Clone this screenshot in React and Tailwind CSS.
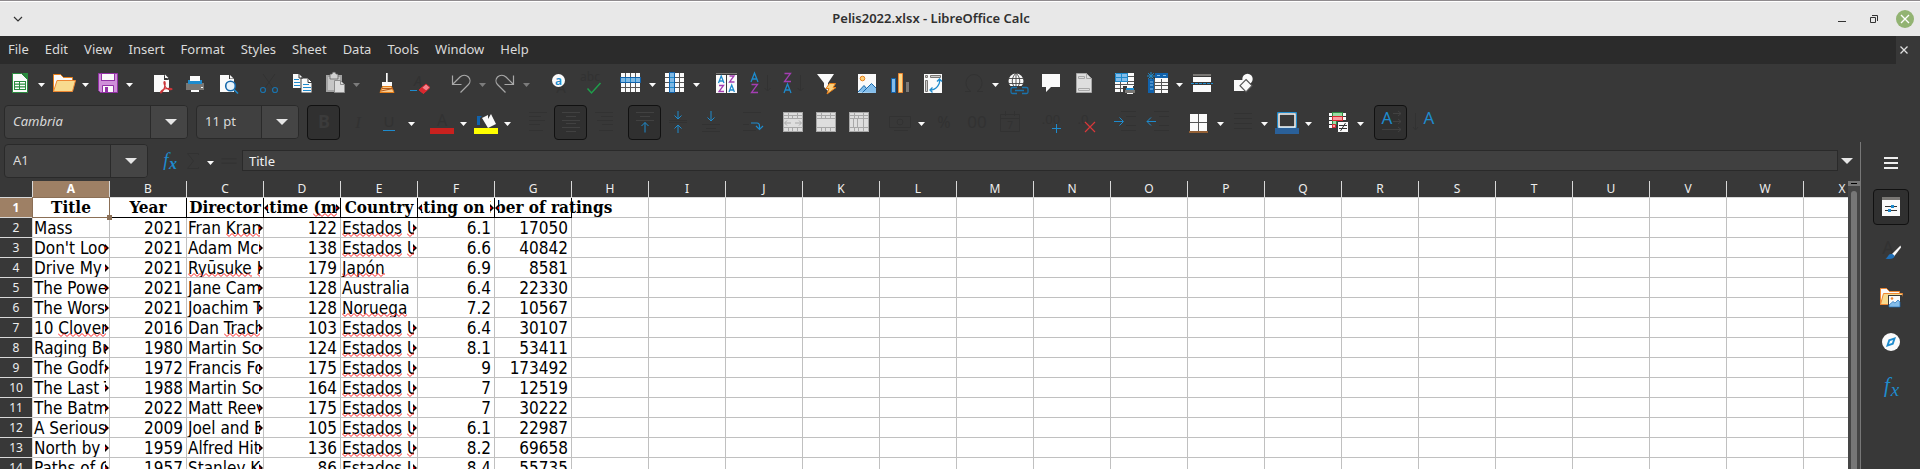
import React from "react";

const FAINT = "#323232";
const BLUE = "#1e8bcd";

function Icon({ children, size = 24 }) {
  return (
    <svg width={size} height={size} viewBox="0 0 24 24" fill="none" aria-hidden="true" className="block shrink-0">
      {children}
    </svg>
  );
}

function Glyph({ x, y, size = 14, fill = FAINT, weight = 400, children, italic, serif, anchor = "middle" }) {
  return (
    <text
      x={x}
      y={y}
      fontSize={size}
      fill={fill}
      fontWeight={weight}
      fontStyle={italic ? "italic" : "normal"}
      textAnchor={anchor}
      fontFamily={serif ? "Liberation Serif, serif" : "Noto Sans, sans-serif"}
    >
      {children}
    </text>
  );
}

const Lines = ({ rows, color = FAINT }) => (
  <g stroke={color}>
    {rows.map(([x1, x2, y]) => (
      <path key={y} d={`M${x1} ${y}H${x2}`} />
    ))}
  </g>
);

const mergeGrid = (inner) => (
  <g>
    <path d="M2 2h20v20H2z" fill="#a8a8a8" />
    <path
      d="M3 3h4v2H3zM8 3h8v2H8zM17 3h4v2h-4zM3 6h4v2H3zM8 6h3v2H8zM12 6h4v2h-4zM17 6h4v2h-4zM3 18h4v3H3zM8 18h3v3H8zM12 18h4v3h-4zM17 18h4v3h-4z"
      fill="#dedede"
    />
    {inner}
  </g>
);

const ICONS = {
  newSheet: (
    <g>
      <path d="M4.500 2.500h9l6 6v13h-15z" fill="#fafafa" stroke="#2a8c3f" />
      <path d="M14 2h6v7z" fill="#2a8c3f" />
      <path d="M6 10h12v9H6z" fill="#2a8c3f" />
      <path d="M7 11h4v1.500H7zM12 11h5v1.500h-5zM7 13.700h4v1.600H7zM12 13.700h5v1.600h-5zM7 16.500h4V18H7zM12 16.500h5V18h-5z" fill="#fff" />
    </g>
  ),
  open: (
    <g>
      <path d="M1.500 21V3.500h7l3 3h9v3" fill="#fafafa" stroke="#e8801a" />
      <path d="M1.500 20.500 5 9.500h18.500l-3 11z" fill="#f8db8f" stroke="#ed8733" />
    </g>
  ),
  save: (
    <g>
      <path d="M2.500 2.500h19v19h-17l-2-2z" fill="#cf8fd9" stroke="#9331a6" />
      <path d="M5 2h14v8H5z" fill="#9331a6" />
      <path d="M6 3h12v6H6zM7 15h10v6H7z" fill="#fafafa" />
      <path d="M6.500 21.500v-7h11v7" stroke="#9331a6" />
      <path d="M9 16h3v5H9z" fill="#9331a6" />
    </g>
  ),
  pdf: (
    <g>
      <path d="M4 4h10l5 5v12H4z" fill="#fafafa" />
      <path d="M14 4v5h5z" fill="#383838" />
      <path d="M15 3.500 18.500 7H15z" fill="#fafafa" />
      <path d="M14.500 10.500c-1 0-.5 3 1 5.500s4.500 3 6 2.500-1-1.500-4.500-1-6.500 2.500-6.500 4 3-1.500 4-5 .9-6 0-6z" stroke="#cb3438" strokeWidth="1.200" />
    </g>
  ),
  print: (
    <g>
      <path d="M3 12h18v7H3z" fill="#797774" />
      <path d="M5 9h2v1h10V9h2v4H5z" fill={BLUE} />
      <path d="M7 5h10v5H7zM8 19h8v2H8zM18 16h2v1h-2z" fill="#fafafa" />
    </g>
  ),
  preview: (
    <g>
      <path d="M4 4h9l5 4v13H4z" fill="#fafafa" />
      <path d="M13 3.500V8h5z" fill="#383838" />
      <path d="M14 4v3.500h3.500z" fill="#fafafa" />
      <circle cx="14.500" cy="15" r="4.800" fill="#e8f3fb" stroke="#1668ab" strokeWidth="1.600" />
      <path d="m18 18.500 4 4" stroke={BLUE} strokeWidth="1.600" />
    </g>
  ),
  cut: (
    <g>
      <path d="m6 3 10 14M18 3 8 17" stroke={FAINT} />
      <circle cx="6" cy="19" r="2.500" stroke="#1a73ad" strokeWidth="1.200" />
      <circle cx="18" cy="19" r="2.500" stroke="#1a73ad" strokeWidth="1.200" />
    </g>
  ),
  copy: (
    <g>
      <path d="M3 3h6l4 4v10H3z" fill="#fafafa" />
      <path d="M11 7h7l4 4v11H11z" fill="#fafafa" stroke="#383838" />
      <path d="M9 3v4h4M18 7.500v4h4" stroke="#383838" />
      <path d="M4 8.500h5M4 11.500h6M4 14.500h6M13 13.500h6M13 16.500h8M13 19.500h8" stroke={BLUE} />
    </g>
  ),
  paste: (
    <g>
      <path d="M3 4h16v17H3z" fill="#a3a3a3" />
      <path d="M5 6h12v13H5z" fill="#c6c6c6" />
      <path d="M7 3h2a2 2 0 0 1 4 0h2v5H7z" fill="#d0d0d0" stroke="#555" strokeWidth=".7" />
      <path d="M11.500 9.500h6l4 4v8h-10z" fill="#dcdcdc" stroke="#8c8c8c" />
      <path d="M17.500 9.500v4h4" stroke="#8c8c8c" />
    </g>
  ),
  brush: (
    <g>
      <path d="M11 2h2v9h-2zM7 11h10v4H7z" fill="#fafafa" />
      <path d="M12.500 2v9" stroke="#bbb" />
      <path d="M7.500 15.500h9l2.500 6H5z" fill="#f8c98a" stroke="#e8801a" />
      <path d="m6 20 12-2.500M7 17.500h11" stroke="#b4591a" />
    </g>
  ),
  clearFormat: (
    <g>
      <Glyph x="10" y="15" italic>A</Glyph>
      <path d="M2 19.500h7" stroke={BLUE} />
      <path d="m11 19 7-6 4 3.500-6.500 6z" fill="#f4808a" stroke="#d9272e" />
      <path d="m11 19 3-2.700 4.500 3.500-3 3z" fill="#d9272e" />
    </g>
  ),
  undo: <path d="M3.500 4.500v9h9M3.500 13.500 11 6a6 6 0 0 1 8.500 0 5.500 5.500 0 0 1 0 7.500L11.500 21.500" stroke="#a8a8a8" strokeWidth="1.200" />,
  redo: <path d="M20.500 4.500v9h-9M20.500 13.500 13 6a6 6 0 0 0-8.500 0 5.500 5.500 0 0 0 0 7.500l8 8" stroke="#a8a8a8" strokeWidth="1.200" />,
  find: (
    <g>
      <Glyph x="16" y="22" size="15">A</Glyph>
      <circle cx="13.500" cy="9.500" r="6.500" fill="#fafafa" />
      <Glyph x="13.500" y="13.500" size="12" weight="600" fill={BLUE}>a</Glyph>
    </g>
  ),
  spell: (
    <g>
      <Glyph x="12" y="10" size="12">abc</Glyph>
      <path d="m9.500 17.500 4 4.500 9-10" stroke="#1f9e4b" strokeWidth="1.500" />
    </g>
  ),
  row: (
    <g>
      <path d="M2 2h19v19H2z" fill="#fafafa" />
      <path d="M6.500 2v19M11.500 2v19M16.500 2v19M2 6.500h19M2 11.500h19M2 16.500h19" stroke="#555" />
      <path d="M1.500 6.500h20v5h-20z" fill="#7fb8e3" stroke="#1062ac" />
      <path d="M6.500 7v4M11.500 7v4M16.500 7v4" stroke={BLUE} />
    </g>
  ),
  column: (
    <g>
      <path d="M2 2h19v19H2z" fill="#fafafa" />
      <path d="M6.500 2v19M11.500 2v19M16.500 2v19M2 6.500h19M2 11.500h19M2 16.500h19" stroke="#555" />
      <path d="M6.500 1.500h5v20h-5z" fill="#7fb8e3" stroke="#1062ac" />
      <path d="M7 6.500h4M7 11.500h4M7 16.500h4" stroke={BLUE} />
    </g>
  ),
  sort: (
    <g>
      <path d="M1 2.500h21" stroke="#797774" />
      <path d="M1 4h21v18H1z" fill="#fafafa" />
      <path d="M11.500 4v18" stroke="#383838" />
      <g strokeWidth="1.300">
        <path d="m3.500 12 2.700-7L9 12M4.400 10h3.700M14 21l2.700-7 2.700 7M15 19h3.600" stroke={BLUE} />
        <path d="M4 14.500h4.500l-4.500 6h5M14.500 5h4.500l-4.500 6h5" stroke="#a33eb2" />
      </g>
    </g>
  ),
  sortAsc: (
    <g>
      <g strokeWidth="1.300">
        <path d="m3 11 3.500-9 3.500 9M4.200 8h4.600" stroke={BLUE} />
        <path d="M3.500 13.500h6l-6 8h6.500" stroke="#a33eb2" />
      </g>
      <path d="M19.500 4v16m-3-3 3 3 3-3" stroke={FAINT} />
    </g>
  ),
  sortDesc: (
    <g>
      <g strokeWidth="1.300">
        <path d="M3.500 2.500h6l-6 8h6.500" stroke="#a33eb2" />
        <path d="m3 22 3.500-9 3.500 9M4.200 19h4.600" stroke={BLUE} />
      </g>
      <path d="M19.500 4v16m-3-3 3 3 3-3" stroke={FAINT} />
    </g>
  ),
  filter: (
    <g>
      <path d="M3 3h17l-6 9v8l-4-4v-4z" fill="#fafafa" />
      <path d="M15.500 12.500h6l-2.500 4h3l-9 6.500 2-5.500h-3z" fill="#fbd07c" stroke="#e8801a" />
    </g>
  ),
  image: (
    <g>
      <path d="M3 3h18v19H3z" fill="#fafafa" />
      <circle cx="7.500" cy="7.500" r="2.300" fill="#fbd07c" stroke="#e8801a" />
      <path d="m3 21.500 6-7 3 3 4.500-5 4.500 4.500v5z" fill="#84bdea" />
      <path d="m3 21 6-6.500 2.500 3m-4 4L16.500 12.500 21 17" stroke="#1668ab" />
    </g>
  ),
  chart: (
    <g>
      <path d="M3.500 7.500h4v14h-4z" fill="#84bdea" stroke="#1062ac" />
      <path d="M10.500 2.500h4v19h-4z" fill="#fbd888" stroke="#ed8733" />
      <path d="M18 11h3v10h-3z" fill="#797774" />
    </g>
  ),
  pivot: (
    <g>
      <path d="M3 3h18v19H3z" fill="#fafafa" />
      <path d="M4.500 4.500h2v2h-2zM9.500 4.500h10v2h-10zM4.500 9.500h2v11h-2z" fill="#ccc" stroke="#797774" />
      <path d="M18.500 8c1 5-3 11-9.500 11M16 10.500 18.500 8l2.500 2.500M11.500 16.500 9 19l2.500 2.500" stroke={BLUE} strokeWidth="1.300" />
    </g>
  ),
  omega: <path d="M3 20.500h6c-3-2-5-5-5-9a8 8 0 0 1 16 0c0 4-2 7-5 9h6" stroke={FAINT} />,
  link: (
    <g>
      <circle cx="10" cy="10" r="7.500" fill="#fafafa" />
      <path d="M2 7.500h16M2 12.500h16M10 2v16M10 2c-5 5-5 11 0 16M10 2c5 5 5 11 0 16" stroke="#444" strokeWidth=".9" />
      <path d="M3 15h21v9H3z" fill="#383838" />
      <path d="M11 16.500H6.500q-1.500 0-1.500 1.500v3q0 1.500 1.500 1.500H11M16 16.500h4.500q1.500 0 1.500 1.500v3q0 1.500-1.500 1.500H16M9 19.500h9" stroke="#1a73ad" strokeWidth="1.300" />
    </g>
  ),
  comment: <path d="M3 3h18v13h-9l-5 5v-5H3z" fill="#fafafa" />,
  header: (
    <g>
      <path d="M4.500 2.500h10l5 5v14h-15z" fill="#dedede" stroke="#a8a8a8" />
      <path d="M14.500 2.500v5h5M6.500 5.500h6v2h-6zM6.500 17.500h11v2h-11z" stroke="#a8a8a8" />
    </g>
  ),
  printArea: (
    <g>
      <path d="M2 2h19v19H2z" fill="#fafafa" />
      <path d="M7.500 2v19M14.500 2v19M2 10.500h19M2 13.500h19M2 17.500h19M14 5.500h7" stroke="#555" />
      <path d="M2.500 2.500h12v8h-12z" fill="#84bdea" stroke={BLUE} />
      <path d="M8.500 3v7M3 6.500h11" stroke={BLUE} />
      <path d="M10 15h14v9H10z" fill="#383838" />
      <path d="M14 14h6v3h-6zM14 22h6v1h-6z" fill="#fafafa" />
      <path d="M13 17h8v2h-8z" fill={BLUE} />
      <path d="M12 19h10v3H12z" fill="#797774" />
    </g>
  ),
  freeze: (
    <g>
      <path d="M3 3h19v19H3z" fill="#fafafa" />
      <path d="M8.500 8v14M15.500 8v14M9 11.500h13M9 14.500h13M9 18.500h13" stroke="#555" />
      <path d="M2 8h6v14H2zM9 2h13v5H9z" fill="#1062ac" />
      <path d="M4 11h3M4 14h3M4 18h3M11 4.500h3M17 4.500h3" stroke="#84bdea" />
      <path d="M2 1h7v7H2z" fill="#383838" />
      <path d="M5 1v8M1 5h8M2.200 2.200l5.600 5.600M7.800 2.200 2.200 7.800" stroke={BLUE} />
    </g>
  ),
  split: (
    <g>
      <path d="M3 3h18v2H3z" fill="#797774" />
      <path d="M3 6h18v5H3zM3 14h18v7H3z" fill="#fafafa" />
      <path d="M1 12.500h22" stroke={BLUE} strokeDasharray="3 1" />
    </g>
  ),
  shapes: (
    <g>
      <circle cx="16.500" cy="8" r="5.200" fill="#fafafa" />
      <path d="M3 9h11v11H3z" fill="#fafafa" />
      <path d="m15 8.500 6 6.200-6 6.300-6-6.300z" fill="#fafafa" stroke="#555" strokeWidth="1.200" />
    </g>
  ),
  bold: <Glyph x="12" y="18" size="18" weight="700" fill="#3b3b3b">B</Glyph>,
  italic: <Glyph x="13" y="18" size="17" italic serif>I</Glyph>,
  underline: (
    <g>
      <Glyph x="11" y="17" size="15">U</Glyph>
      <path d="M5 20.500h12" stroke={BLUE} />
    </g>
  ),
  fontColor: (
    <g>
      <Glyph x="12" y="16" size="16">A</Glyph>
      <path d="M0 18h24v6H0z" fill="#c9211e" />
    </g>
  ),
  highlight: (
    <g>
      <path d="M3 15V6h5L6 8v7z" fill="#1062ac" />
      <path d="m8 8 4-2 2-1v4l3-5 5 10-8 4z" fill="#fafafa" />
      <path d="M0 18h24v6H0z" fill="#ffff00" />
    </g>
  ),
  alignLeft: <Lines rows={[[3, 21, 2.5], [3, 15, 6.5], [3, 19, 10.5], [3, 14, 14.5], [3, 17, 20.5]]} />,
  alignCenter: <Lines color="#414141" rows={[[3, 21, 2.5], [7, 17, 6.5], [3, 21, 10.5], [7, 17, 13.5], [3, 21, 17.5], [7, 17, 21.5]]} />,
  alignRight: <Lines rows={[[3, 21, 2.5], [9, 21, 6.5], [5, 21, 10.5], [10, 21, 14.5], [7, 21, 20.5]]} />,
  alignTop: (
    <g>
      <Lines color="#414141" rows={[[3, 21, 2.5], [7, 17, 6.5], [3, 21, 10.5]]} />
      <path d="M12 12.500v10M8.500 16 12 12.500l3.500 3.500" stroke={BLUE} />
    </g>
  ),
  alignMiddle: (
    <g>
      <Lines rows={[[3, 21, 10.5], [3, 21, 12.5]]} />
      <path d="M12 1v8M8.500 5.500 12 9l3.500-3.500M12 23v-8M8.500 18.500 12 15l3.500 3.500" stroke={BLUE} />
    </g>
  ),
  alignBottom: (
    <g>
      <Lines rows={[[3, 21, 14.5], [7, 17, 18.5], [3, 21, 21.5]]} />
      <path d="M12 1v10M8.500 7.500 12 11l3.500-3.500" stroke={BLUE} />
    </g>
  ),
  wrap: (
    <g>
      <Lines rows={[[3, 21, 2.5], [3, 9, 14.5], [3, 16, 20.5]]} />
      <path d="M11 13h6q2.500 0 2.500 3v3M16 16l3.500 3.500L23 16" stroke={BLUE} strokeWidth="1.200" />
    </g>
  ),
  mergeCenter: mergeGrid(
    <g>
      <path d="M3 9h18v8H3z" fill="#dedede" />
      <path d="M4 13h6M6 10.500 3.500 13 6 15.500M14 13h6M18 10.500l2.500 2.500-2.500 2.500" stroke="#a8a8a8" />
    </g>
  ),
  mergeCells: mergeGrid(<path d="M3 9h18v8H3z" fill="#dedede" />),
  splitCells: mergeGrid(<path d="M3 9h3v8H3zM7 9h3v8H7zM11 9h5v8h-5zM17 9h4v8h-4z" fill="#dedede" />),
  currency: (
    <g stroke={FAINT}>
      <path d="M1.500 6.500h21v11h-21zM6 20.500h14" />
      <circle cx="12" cy="12" r="3" />
    </g>
  ),
  percent: <Glyph x="12" y="18" size="16">%</Glyph>,
  number: <Glyph x="12" y="18" size="17">00</Glyph>,
  date: (
    <g>
      <path d="M2.500 4.500h19v17h-19zM3 8.500h18M7.500 1v5M16.500 1v5" stroke={FAINT} />
      <Glyph x="12" y="19" size="10">7</Glyph>
    </g>
  ),
  addDecimal: (
    <g>
      <Glyph x="12" y="14" size="13">.00</Glyph>
      <path d="M17.500 14v9M13 18.500h9" stroke={BLUE} />
    </g>
  ),
  delDecimal: (
    <g>
      <Glyph x="11" y="14" size="13">.0</Glyph>
      <path d="m13 12 10 10M23 12 13 22" stroke="#d9383a" strokeWidth="1.200" />
    </g>
  ),
  indentMore: (
    <g>
      <Lines rows={[[8, 23, 1.5], [13, 23, 6.5], [13, 23, 15.5], [8, 23, 20.5]]} />
      <path d="M1 11.500h9M6.500 7.500l4 4-4 4" stroke={BLUE} />
    </g>
  ),
  indentLess: (
    <g>
      <Lines rows={[[8, 23, 1.5], [13, 23, 6.5], [13, 23, 15.5], [8, 23, 20.5]]} />
      <path d="M10 11.500H1M5 7.500l-4 4 4 4" stroke={BLUE} />
    </g>
  ),
  borders: (
    <g>
      <path d="M3 4h17v17H3z" fill="#fafafa" />
      <path d="M11.500 4v17M3 12.500h17" stroke="#555" />
      <path d="M2 22h19" stroke="#ed8733" />
    </g>
  ),
  borderStyle: <Lines rows={[[3, 21, 3.5], [3, 21, 8.5], [3, 21, 13.5], [3, 21, 18.5]]} />,
  borderColor: (
    <g>
      <path d="M2.500 2.500h19v15h-19z" stroke={BLUE} />
      <path d="M4 4h16v13H4z" stroke="#fafafa" strokeWidth="1.500" />
      <path d="M0 18h24v6H0z" fill="#2a6099" />
    </g>
  ),
  conditional: (
    <g>
      <path d="M2 3h3v3H2zM2 7h3v3H2zM2 11h3v3H2zM2 15h3v3H2zM16 3h3v3h-3zM16 7h3v3h-3z" fill="#fafafa" />
      <path d="M5.500 2.500h10v4h-10zM5.500 10.500h4v4h-4z" fill="#99dba4" stroke="#2a8c3f" />
      <path d="M5.500 6.500h10v4h-10zM5.500 14.500h3v3h-3z" fill="#f99ba0" stroke="#d9272e" />
      <path d="M10.500 11.500h11v11h-11z" fill="#fafafa" stroke="#383838" />
      <path d="M12 15.500h8M12 18.500h8M18.500 13l-5 8" stroke="#333" />
    </g>
  ),
  textLtr: (
    <g>
      <Glyph x="8" y="14" size="17" fill={BLUE}>A</Glyph>
      <path d="M14 3.500h8M19 1l3 2.500L19 6M14 11.500h8M19 9l3 2.500-3 2.500M3 19.500h19M19 17l3 2.500-3 2.500" stroke="#414141" />
    </g>
  ),
  textTtb: (
    <g>
      <path d="M3.500 3v17M1 17l2.500 3L6 17" stroke={FAINT} />
      <Glyph x="17" y="14" size="17" fill={BLUE}>A</Glyph>
    </g>
  ),
  properties: (
    <g>
      <path d="M3 2h18v3H3z" fill="#797774" />
      <path d="M3 5h18v16H3z" fill="#fafafa" />
      <path d="M6 11.500h12M6 15.500h12" stroke="#333" />
      <path d="M12 10h3v3h-3zM9 14h3v3H9z" fill={BLUE} />
    </g>
  ),
  styles: (
    <g>
      <Glyph x="9" y="14" size="18">A</Glyph>
      <path d="M21.500 5.500 13 14l2 2.500 7-9z" fill="#fafafa" />
      <path d="M12 14c-3 0-3 3.500-5.500 4.500 4 1.200 9 .5 9-2.500-.5-1.500-2-2-3.500-2z" fill="#1e6fb8" />
    </g>
  ),
  gallery: (
    <g>
      <path d="M1.500 19.500V3.500h6l3 3h10v3" fill="#fafafa" stroke="#ed8733" />
      <path d="m1.500 19.500 3-11h19l-3 11z" fill="#f8db8f" stroke="#ed8733" />
      <path d="M9 10h14v13H9z" fill="#383838" />
      <path d="M10 11h11v11H10z" fill="#fafafa" />
      <circle cx="13" cy="13.500" r="1.300" fill="#ed8733" />
      <path d="m10 20 4-3.500 2 1.500 3-3 2 2v5H10z" fill="#84bdea" stroke="#1e6fb8" strokeWidth=".7" />
    </g>
  ),
  navigator: (
    <g>
      <circle cx="12" cy="12" r="9" fill="#fafafa" />
      <path d="m17 7-2.500 7.500L7 17l2.500-7.500z" fill={BLUE} />
      <path d="m14 10-1 3-3 1 1-3z" fill="#fafafa" />
    </g>
  ),
  functions: (
    <g>
      <Glyph x="8" y="17" size="21" italic serif fill={BLUE}>f</Glyph>
      <Glyph x="16" y="21" size="19" italic serif fill={BLUE}>x</Glyph>
    </g>
  ),
  fx: (
    <g>
      <Glyph x="9" y="17" size="19" italic serif fill={BLUE}>f</Glyph>
      <Glyph x="16" y="20" size="16" italic weight="700" serif fill={BLUE}>x</Glyph>
    </g>
  ),
  sum: <path d="M17.500 6v-1.500h-11l6 7.500-6 7.500h11V18" stroke={FAINT} />,
  equals: <path d="M3 9.500h18M3 14.500h18" stroke={FAINT} strokeWidth="1.500" />,
};

const Caret = ({ big, dim }) =>
  big ? (
    <svg width="12" height="6" viewBox="0 0 12 6" aria-hidden="true">
      <path d="M0 0h12L6 6z" fill="#e6e6e6" />
    </svg>
  ) : (
    <svg width="7" height="4" viewBox="0 0 7 4" aria-hidden="true">
      <path d="M0 0h7L3.500 4z" fill={dim ? "#7c7c7c" : "#fafafa"} />
    </svg>
  );

function Tool({ icon, label, pressed }) {
  return (
    <button
      type="button"
      aria-label={label}
      aria-pressed={pressed ? true : undefined}
      className={
        pressed
          ? "flex h-[35px] w-[33px] shrink-0 items-center justify-center rounded-sm border border-[#111] bg-[#303030]"
          : "flex h-[35px] w-[33px] shrink-0 items-center justify-center"
      }
    >
      <Icon>{ICONS[icon]}</Icon>
    </button>
  );
}

function Toolbar({ items }) {
  return items.map((group, g) => (
    <div key={g} className="flex items-center">
      {group.map(([icon, label, opt = ""]) => (
        <React.Fragment key={icon}>
          <Tool icon={icon} label={label} pressed={opt.includes("p")} />
          {opt.includes("m") && (
            <button type="button" aria-label={`${label} options`} className="flex h-[35px] w-[11px] items-center justify-center pt-1">
              <Caret dim={opt.includes("d")} />
            </button>
          )}
        </React.Fragment>
      ))}
    </div>
  ));
}

function Combo({ label, value, className, inputClass = "" }) {
  return (
    <div className={`flex h-[34px] shrink-0 overflow-hidden rounded border border-[#2a2a2a] bg-[#404040] ${className}`}>
      <input aria-label={label} defaultValue={value} className={`min-w-0 flex-1 bg-transparent pl-2 text-[13px] text-[#dadada] outline-none ${inputClass}`} />
      <button type="button" aria-label={`${label} list`} className="flex w-[37px] items-center justify-center border-l border-[#2a2a2a] bg-[#454545] pl-1">
        <Caret big />
      </button>
    </div>
  );
}

const DOCUMENT_GROUPS = [[["newSheet", "New", "m"], ["open", "Open", "m"], ["save", "Save", "m"]]];

const EDIT_GROUPS = [
  [["pdf", "Export as PDF"], ["print", "Print"], ["preview", "Print preview"]],
  [["cut", "Cut"], ["copy", "Copy"], ["paste", "Paste", "md"]],
  [["brush", "Clone formatting"], ["clearFormat", "Clear formatting"]],
  [["undo", "Undo", "md"], ["redo", "Redo", "md"]],
  [["find", "Find and replace"], ["spell", "Spelling"]],
  [["row", "Row", "m"], ["column", "Column", "m"]],
  [["sort", "Sort"], ["sortAsc", "Sort ascending"], ["sortDesc", "Sort descending"], ["filter", "AutoFilter"]],
  [["image", "Insert image"], ["chart", "Insert chart"], ["pivot", "Pivot table"]],
  [["omega", "Special character", "m"], ["link", "Hyperlink"], ["comment", "Comment"], ["header", "Headers and footers"]],
  [["printArea", "Print area"], ["freeze", "Freeze rows and columns", "m"], ["split", "Split window"]],
  [["shapes", "Draw functions"]],
];

const FORMAT_GROUPS = [
  [["bold", "Bold", "p"], ["italic", "Italic"], ["underline", "Underline", "m"]],
  [["fontColor", "Font color", "m"], ["highlight", "Background color", "m"]],
  [["alignLeft", "Align left"], ["alignCenter", "Center horizontally", "p"], ["alignRight", "Align right"]],
  [["alignTop", "Align top", "p"], ["alignMiddle", "Center vertically"], ["alignBottom", "Align bottom"]],
  [["wrap", "Wrap text"]],
  [["mergeCenter", "Merge and center"], ["mergeCells", "Merge cells"], ["splitCells", "Split cells"]],
  [["currency", "Currency", "m"], ["percent", "Percent"], ["number", "Number"], ["date", "Date"]],
  [["addDecimal", "Add decimal place"], ["delDecimal", "Delete decimal place"]],
  [["indentMore", "Increase indent"], ["indentLess", "Decrease indent"]],
  [["borders", "Borders", "m"], ["borderStyle", "Border style", "m"], ["borderColor", "Border color", "m"]],
  [["conditional", "Conditional formatting", "m"]],
  [["textLtr", "Left to right", "p"], ["textTtb", "Top to bottom"]],
];

const MENUS = ["File", "Edit", "View", "Insert", "Format", "Styles", "Sheet", "Data", "Tools", "Window", "Help"];
const COLUMNS = "ABCDEFGHIJKLMNOPQRSTUVWX".split("");

const HEADINGS = ["Title", "Year", "Director", "Runtime (mins)", "Country", "Rating on FA", "Number of ratings"];
const EU = "Estados Unidos";
const ROWS = [
  ["Mass", "2021", "Fran Kranz", "122", EU, "6.1", "17050"],
  ["Don't Look Up", "2021", "Adam McKay", "138", EU, "6.6", "40842"],
  ["Drive My Car", "2021", "Ryūsuke Hamaguchi", "179", "Japón", "6.9", "8581"],
  ["The Power of the Dog", "2021", "Jane Campion", "128", "Australia", "6.4", "22330"],
  ["The Worst Person in the World", "2021", "Joachim Trier", "128", "Noruega", "7.2", "10567"],
  ["10 Cloverfield Lane", "2016", "Dan Trachtenberg", "103", EU, "6.4", "30107"],
  ["Raging Bull", "1980", "Martin Scorsese", "124", EU, "8.1", "53411"],
  ["The Godfather", "1972", "Francis Ford Coppola", "175", EU, "9", "173492"],
  ["The Last Temptation of Christ", "1988", "Martin Scorsese", "164", EU, "7", "12519"],
  ["The Batman", "2022", "Matt Reeves", "175", EU, "7", "30222"],
  ["A Serious Man", "2009", "Joel and Ethan Coen", "105", EU, "6.1", "22987"],
  ["North by Northwest", "1959", "Alfred Hitchcock", "136", EU, "8.2", "69658"],
  ["Paths of Glory", "1957", "Stanley Kubrick", "86", EU, "8.4", "55735"],
];
const MISSPELLED = new Set(["Kranz", "Ryūsuke", "Hamaguchi", "Cloverfield", "Trachtenberg", "Estados", "Unidos", "Japón", "Noruega", "(mins)"]);

const SQUIGGLE = "M0 .5" + "l3 3l3 -3".repeat(30);

function Words({ text }) {
  return text.split(" ").map((word, i) => (
    <React.Fragment key={i}>
      {i > 0 && " "}
      {MISSPELLED.has(word) ? (
        <span className="relative inline-block">
          {word}
          <svg aria-hidden="true" className="absolute top-[15px] left-0 h-1 w-full overflow-hidden" fill="none">
            <path d={SQUIGGLE} stroke="#ff2020" />
          </svg>
        </span>
      ) : (
        word
      )}
    </React.Fragment>
  ));
}

function Overflow({ side }) {
  return (
    <svg
      width="4"
      height="8"
      viewBox="0 0 4 8"
      aria-hidden="true"
      className={side === "left" ? "absolute top-[6px] left-0 rotate-180" : "absolute top-[6px] right-0"}
    >
      <path d="M0 0v8l4-4z" fill="#000" />
      <path d="M0 2.500v3L2 4z" fill="#ff0000" />
    </svg>
  );
}

function Grid() {
  const line = "border-[#c0c0c0]";
  return (
    <table className="w-[1881px] table-fixed border-separate border-spacing-0">
      <colgroup>
        <col className="w-[33px]" />
        {COLUMNS.map((c) => (
          <col key={c} className="w-[77px]" />
        ))}
      </colgroup>
      <thead>
        <tr className="h-[17px]">
          <td className="border-r border-b border-[#d8d8d8] bg-[#383838] p-0" />
          {COLUMNS.map((c) => (
            <th
              key={c}
              scope="col"
              className={`border-r border-b p-0 text-center text-[12px] leading-4 ${
                c === "A" ? "border-r-[#d8d8d8] border-b-[#8b6f56] bg-[#9e8065] font-bold text-white" : "border-[#d8d8d8] bg-[#383838] font-normal text-[#eee]"
              }`}
            >
              {c}
            </th>
          ))}
        </tr>
      </thead>
      <tbody>
        <tr className="h-5 font-['DejaVu_Serif_Condensed','DejaVu_Serif',serif] text-[17px] font-bold text-black">
          <th scope="row" className="border-r border-b border-[#d8d8d8] border-r-[#8b6f56] bg-[#9e8065] p-0 text-center font-['Noto_Sans',sans-serif] text-[12px] leading-[19px] font-bold text-white">
            1
          </th>
          {COLUMNS.map((c, i) => {
            const text = HEADINGS[i];
            const clipped = i === 3 || i === 5;
            if (!text) return <td key={c} className={`border-r border-b bg-white p-0 ${line}`} />;
            return (
              <td key={c} className={`border-r border-b p-0 ${i === 0 ? "border-[#8b6f56]" : "border-black"} bg-white`}>
                <div className={`relative h-[19px] ${i === 0 ? "outline outline-[#8b6f56]" : ""}`}>
                  <div
                    className={`flex h-[19px] justify-center leading-[19px] whitespace-nowrap ${
                      clipped ? "mx-[3px] overflow-hidden" : i === 6 ? "[clip-path:inset(0_-60px_0_3px)]" : ""
                    }`}
                  >
                    <span className="shrink-0">
                      <Words text={text} />
                    </span>
                  </div>
                  {(clipped || i === 6) && <Overflow side="left" />}
                  {clipped && <Overflow side="right" />}
                  {i === 0 && <span className="absolute -right-[3px] -bottom-[3px] z-10 h-[5px] w-[5px] bg-[#8b6f56]" />}
                </div>
              </td>
            );
          })}
        </tr>
        {ROWS.map((row, r) => (
          <tr key={r} className="h-5 font-['DejaVu_Sans_Condensed','DejaVu_Sans',sans-serif] text-[17px] text-black">
            <th scope="row" className="border-r border-b border-[#d8d8d8] bg-[#383838] p-0 text-center font-['Noto_Sans',sans-serif] text-[12px] leading-[19px] font-normal text-[#eee]">
              {r + 2}
            </th>
            {COLUMNS.map((c, i) => {
              const text = row[i];
              const isText = i === 0 || i === 2 || i === 4;
              const long = isText && text.length > 9;
              return (
                <td key={c} className={`border-r border-b bg-white p-0 ${line}`}>
                  {text && (
                    <div className="relative">
                      <div className={`h-[19px] overflow-hidden leading-5 whitespace-nowrap ${isText ? "mr-[3px] pl-px" : "pr-[3px] text-right"}`}>
                        <Words text={text} />
                      </div>
                      {long && <Overflow side="right" />}
                    </div>
                  )}
                </td>
              );
            })}
          </tr>
        ))}
      </tbody>
    </table>
  );
}

const SIDEBAR = [
  ["properties", "Properties", true],
  ["styles", "Styles"],
  ["gallery", "Gallery"],
  ["navigator", "Navigator"],
  ["functions", "Functions"],
];

export default function App() {
  return (
    <div className="flex h-screen flex-col overflow-hidden bg-[#383838] font-['Noto_Sans',sans-serif] text-[13px] text-[#dadada]">
      <header className="flex h-9 shrink-0 items-center border-t border-[#8f8b8e] bg-[#e8e8e8] text-[#303030] shadow-[inset_0_1px_0_#fff]">
        <button type="button" aria-label="Window menu" className="flex w-9 justify-center">
          <svg width="10" height="6" viewBox="0 0 10 6" fill="none" aria-hidden="true">
            <path d="m1 1 4 4 4-4" stroke="#333" strokeWidth="1.200" />
          </svg>
        </button>
        <h1 className="flex-1 text-center text-[13px] font-semibold">Pelis2022.xlsx - LibreOffice Calc</h1>
        <div className="flex">
          <button type="button" aria-label="Minimize" className="flex w-8 items-center justify-center">
            <svg width="18" height="18" viewBox="0 0 18 18" aria-hidden="true">
              <path d="M5 11h8v1H5z" fill="#333" />
            </svg>
          </button>
          <button type="button" aria-label="Restore" className="flex w-8 items-center justify-center">
            <svg width="18" height="18" viewBox="0 0 18 18" fill="none" aria-hidden="true">
              <path d="M5.500 7.500h5v5h-5zM7 5.500h5.500V11" stroke="#333" />
            </svg>
          </button>
          <button type="button" aria-label="Close" className="flex w-[30px] items-center justify-center">
            <svg width="18" height="18" viewBox="0 0 18 18" aria-hidden="true">
              <circle cx="9" cy="9" r="9" fill="#92b372" />
              <path d="m5 5 8 8M13 5l-8 8" stroke="#fff" strokeWidth="1.300" />
            </svg>
          </button>
        </div>
      </header>

      <nav className="flex h-7 shrink-0 items-stretch">
        <div className="flex flex-1 items-center gap-4 bg-[#2b2b2b] pl-2">
          {MENUS.map((m) => (
            <button key={m} type="button">
              {m}
            </button>
          ))}
        </div>
        <button type="button" aria-label="Close document" className="flex w-6 items-center pl-1">
          <svg width="8" height="8" viewBox="0 0 8 8" aria-hidden="true">
            <path d="m.5.500 7 7M7.500.500l-7 7" stroke="#e0e0e0" strokeWidth="1.300" />
          </svg>
        </button>
      </nav>

      <div role="toolbar" aria-label="Standard" className="flex h-[38px] shrink-0 items-center gap-[10px] pl-[3px]">
        <Toolbar items={DOCUMENT_GROUPS} />
        <div className="flex items-center gap-2">
          <Toolbar items={EDIT_GROUPS} />
        </div>
      </div>

      <div role="toolbar" aria-label="Formatting" className="flex h-10 shrink-0 items-center gap-2 pl-1">
        <Combo label="Font name" value="Cambria" className="w-[184px]" inputClass="italic" />
        <Combo label="Font size" value="11 pt" className="w-[103px]" />
        <Toolbar items={FORMAT_GROUPS} />
      </div>

      <div className="flex min-h-0 flex-1">
        <main className="flex min-w-0 flex-1 flex-col">
          <div className="flex h-[39px] shrink-0 items-center pb-0.5 pl-1">
            <Combo label="Name box" value="A1" className="w-36" />
            <button type="button" aria-label="Function wizard" className="ml-2 flex w-[25px] justify-center">
              <Icon>{ICONS.fx}</Icon>
            </button>
            <button type="button" aria-label="Select function" className="flex w-6 justify-center">
              <Icon>{ICONS.sum}</Icon>
            </button>
            <button type="button" aria-label="Function options" className="flex w-[11px] justify-center pt-1">
              <Caret />
            </button>
            <button type="button" aria-label="Formula" className="flex w-[26px] justify-center">
              <Icon size={20}>{ICONS.equals}</Icon>
            </button>
            <input
              aria-label="Input line"
              defaultValue="Title"
              className="h-[21px] min-w-0 flex-1 border border-[#2a2a2a] bg-[#404040] pl-1.5 text-[13px] text-[#f0f0f0] outline-none"
            />
            <button type="button" aria-label="Expand formula bar" className="flex w-[22px] justify-center pr-1">
              <Caret big />
            </button>
          </div>
          <div className="flex min-h-0 flex-1">
            <div className="min-w-0 flex-1 overflow-hidden">
              <Grid />
            </div>
            <div className="flex w-3 shrink-0 flex-col items-center bg-[#454545]">
              <div className="flex h-[5px] w-full items-center justify-center bg-[#777]">
                <div className="h-px w-1.5 bg-black" />
              </div>
              <div className="mt-[5px] w-1.5 flex-1 rounded-t bg-[#777]" />
            </div>
          </div>
        </main>

        <aside className="flex w-[60px] shrink-0 flex-col items-center border-l border-[#777]">
          <button type="button" aria-label="Sidebar settings" className="mt-[15px] flex h-3 w-3.5 flex-col justify-between">
            <span className="h-0.5 w-full bg-[#eee]" />
            <span className="h-0.5 w-full bg-[#eee]" />
            <span className="h-0.5 w-full bg-[#eee]" />
          </button>
          <div className="mt-5 flex flex-col gap-[9px]">
            {SIDEBAR.map(([icon, label, on]) => (
              <button
                key={icon}
                type="button"
                aria-label={label}
                className={`flex h-9 w-9 items-center justify-center ${on ? "rounded border border-[#111] bg-[#303030]" : ""}`}
              >
                <Icon>{ICONS[icon]}</Icon>
              </button>
            ))}
          </div>
        </aside>
      </div>
    </div>
  );
}
